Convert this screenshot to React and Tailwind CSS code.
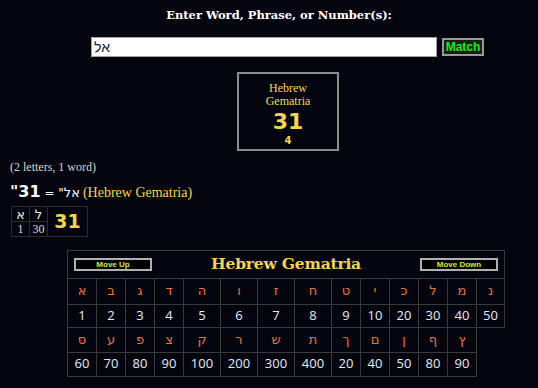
import React from "react";

const row1 = [
  ["א", 1], ["ב", 2], ["ג", 3], ["ד", 4], ["ה", 5], ["ו", 6], ["ז", 7],
  ["ח", 8], ["ט", 9], ["י", 10], ["כ", 20], ["ל", 30], ["מ", 40], ["נ", 50],
];
const row2 = [
  ["ס", 60], ["ע", 70], ["פ", 80], ["צ", 90], ["ק", 100], ["ר", 200], ["ש", 300],
  ["ת", 400], ["ך", 20], ["ם", 40], ["ן", 50], ["ף", 80], ["ץ", 90],
];
const widths = [29, 29, 29, 29, 37, 37, 37, 37, 29, 29, 29, 29, 29, 28];

const cell = "border border-[#3a3a3a] text-center p-0";

const LetterRow = ({ items, h }) => (
  <tr className={h}>
    {items.map(([l], i) => (
      <td key={i} className={`${cell} text-[#e8743c] text-[13px] font-['DejaVu_Sans',sans-serif]`}>
        {l}
      </td>
    ))}
  </tr>
);

const NumRow = ({ items, h }) => (
  <tr className={h}>
    {items.map(([, n], i) => (
      <td key={i} className={`${cell} text-[#e4ecf4] text-[13px] font-['Open_Sans',sans-serif]`}>
        {n}
      </td>
    ))}
  </tr>
);

const SmallBtn = ({ children }) => (
  <button className="w-[78px] h-[13px] bg-black border-2 border-[#b0b0b0] text-[8px] leading-[9px] font-bold text-[#d6e84a] font-['Liberation_Sans',sans-serif]">
    {children}
  </button>
);

export default function App() {
  return (
    <div className="w-[538px] h-[388px] overflow-hidden bg-[#04040f] font-['Liberation_Serif',serif]">
      <div className="pt-[7px] flex justify-center pl-[20px]">
        <h1 className="text-white font-bold text-[11.5px] leading-[16px] font-['DejaVu_Serif',serif]">
          Enter Word, Phrase, or Number(s):
        </h1>
      </div>

      <div className="mt-[14px] flex items-center gap-[5px] pl-[91px]">
        <input
          readOnly
          value="אל"
          className="w-[346px] h-[20px] bg-white border border-[#a0a0a0] px-[2px] text-[14px] text-[#1a2040] font-['Liberation_Sans',sans-serif] outline-none"
        />
        <button className="w-[42px] h-[18px] bg-[#1c1c1c] border-2 border-[#9a9a9a] text-[#1ee81e] font-bold text-[12px] leading-[14px] font-['Liberation_Sans',sans-serif]">
          Match
        </button>
      </div>

      <div className="mt-[15px] ml-[237px] w-[102px] h-[79px] border-2 border-[#8c8c8c] flex flex-col items-center pt-[8px] text-[#f2d64c]">
        <div className="text-[12px] leading-[13px] text-center">Hebrew<br />Gematria</div>
        <div className="text-[22px] leading-[24px] font-bold font-['DejaVu_Sans',sans-serif] mt-[2px]">31</div>
        <div className="text-[10px] leading-[12px] font-bold font-['DejaVu_Sans',sans-serif] mt-[1px]">4</div>
      </div>

      <div className="mt-[10px] ml-[10px] text-[12px] leading-[12px] text-[#d8d4c8]">(2 letters, 1 word)</div>

      <div className="mt-[10px] ml-[10px] flex items-baseline text-white leading-[18px]">
        <span className="text-[16px] font-bold font-['DejaVu_Sans',sans-serif]">"31</span>
        <span className="text-[12px] font-['DejaVu_Sans',sans-serif] whitespace-pre"> = "</span>
        <bdi className="text-[13px] font-['DejaVu_Sans',sans-serif]">אל</bdi>
        <span className="text-[14px] text-[#f2d64c] ml-[3px]">(Hebrew Gematria)</span>
      </div>

      <table className="mt-[4px] ml-[11px] border-collapse">
        <tbody>
          <tr className="h-[15px]">
            <td className="border border-[#2c2c2c] w-[18px] text-center text-[13px] leading-[13px] text-[#e6ecf2] font-['DejaVu_Sans',sans-serif] p-0">א</td>
            <td className="border border-[#2c2c2c] w-[18px] text-center text-[13px] leading-[13px] text-[#e6ecf2] font-['DejaVu_Sans',sans-serif] p-0">ל</td>
            <td rowSpan={2} className="border border-[#2c2c2c] w-[40px] text-center text-[19px] font-bold text-[#f2d64c] font-['DejaVu_Sans',sans-serif] p-0">31</td>
          </tr>
          <tr className="h-[14px]">
            <td className="border border-[#2c2c2c] text-center text-[12px] leading-[12px] text-[#d4dae0] p-0">1</td>
            <td className="border border-[#2c2c2c] text-center text-[12px] leading-[12px] text-[#d4dae0] p-0">30</td>
          </tr>
        </tbody>
      </table>

      <table className="mt-[13px] ml-[67px] border-collapse table-fixed">
        <colgroup>
          {widths.map((w, i) => (
            <col key={i} style={{ width: w }} />
          ))}
        </colgroup>
        <tbody>
          <tr className="h-[28px]">
            <td colSpan={14} className="border border-[#3a3a3a] p-0">
              <div className="flex items-center justify-between px-[6px]">
                <SmallBtn>Move Up</SmallBtn>
                <span className="text-[15.5px] font-bold text-[#f2d64c] font-['DejaVu_Serif',serif] tracking-[-0.2px]">Hebrew Gematria</span>
                <SmallBtn>Move Down</SmallBtn>
              </div>
            </td>
          </tr>
          <LetterRow items={row1} h="h-[26px]" />
          <NumRow items={row1} h="h-[23px]" />
          <LetterRow items={row2} h="h-[25px]" />
          <NumRow items={row2} h="h-[24px]" />
        </tbody>
      </table>
    </div>
  );
}
